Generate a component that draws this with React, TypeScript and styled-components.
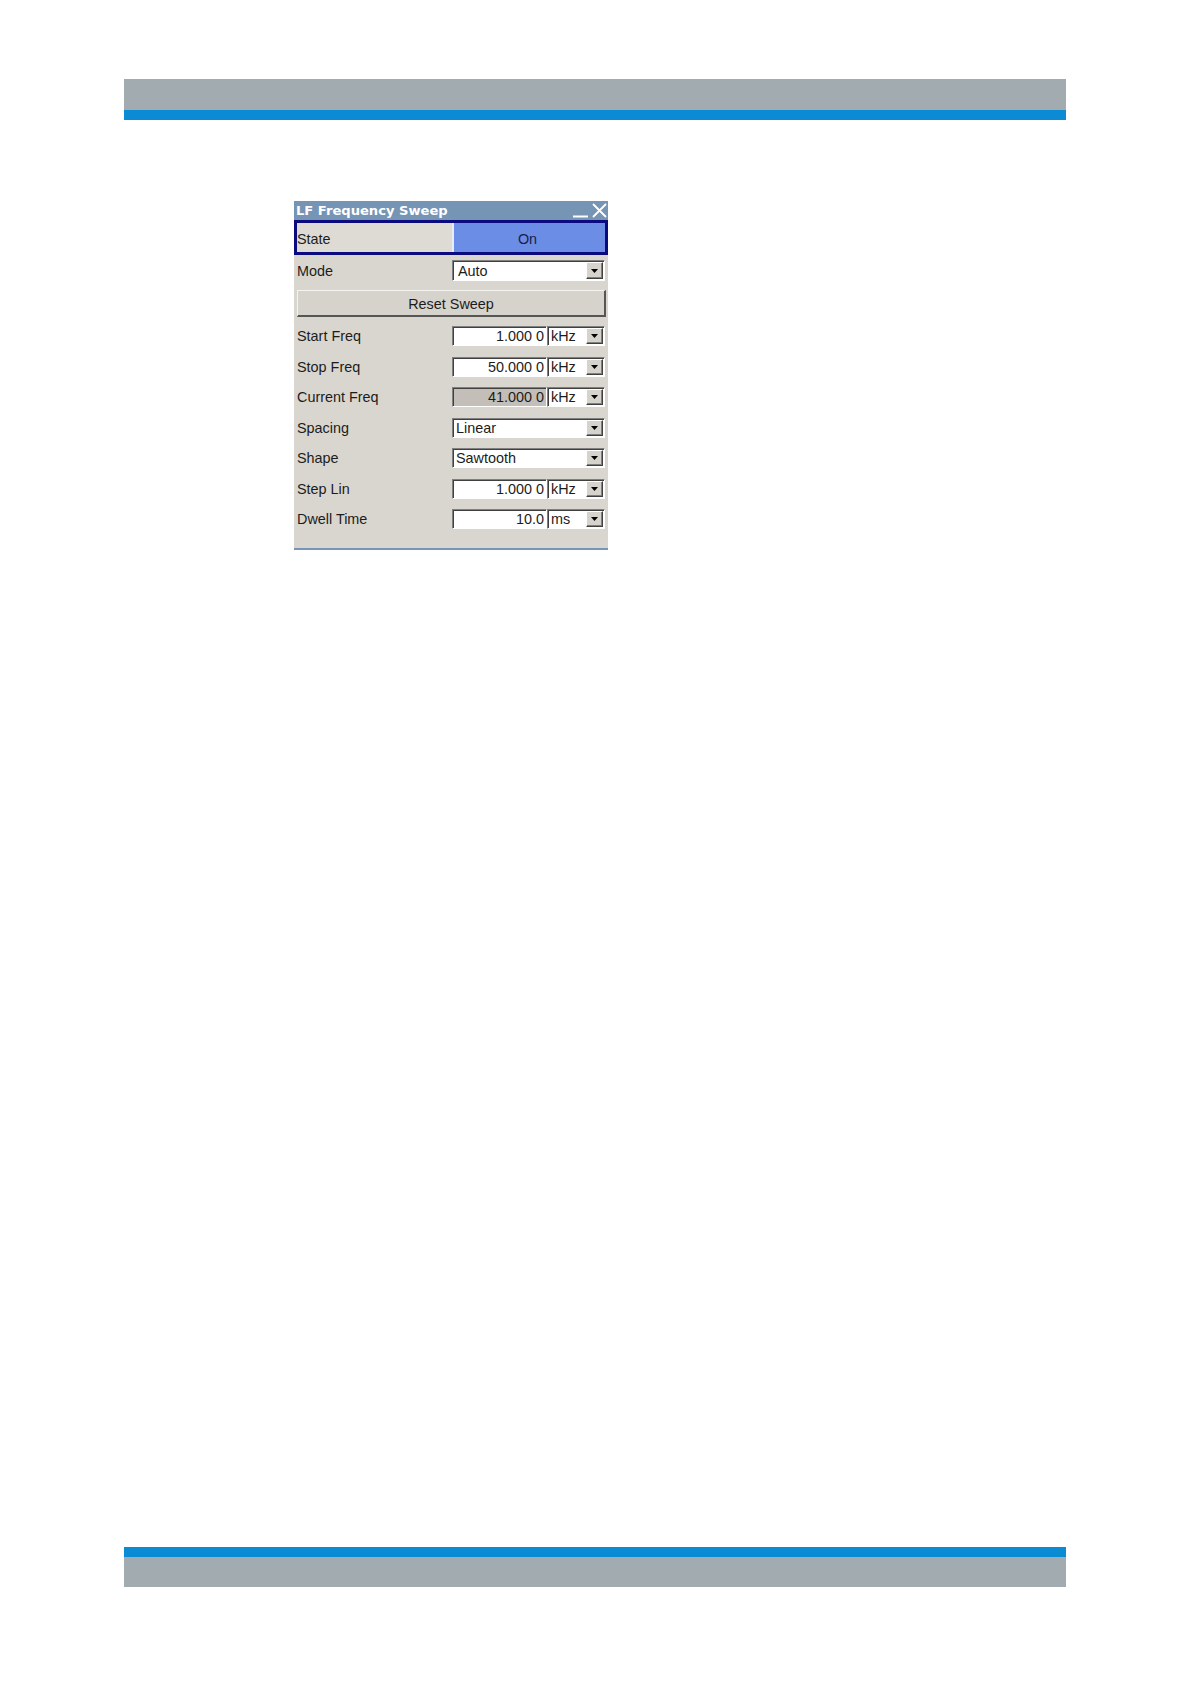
import React from "react";
import styled, { createGlobalStyle } from "styled-components";

const GlobalStyle = createGlobalStyle`
  html, body {
    margin: 0;
    padding: 0;
    background: #ffffff;
  }
  body {
    font-family: "Liberation Sans", Arial, sans-serif;
  }
`;

const Page = styled.div`
  width: 1191px;
  min-height: 1684px;
  display: flex;
  flex-direction: column;
  padding-top: 79px;
  box-sizing: border-box;
`;

const Band = styled.div<{ $flip?: boolean }>`
  margin-left: 124px;
  width: 942px;
  display: flex;
  flex-direction: ${(p) => (p.$flip ? "column-reverse" : "column")};
`;

const GreyStrip = styled.div<{ $h?: number }>`
  height: ${(p) => p.$h ?? 31}px;
  background: #a1abb0;
`;

const BlueStrip = styled.div`
  height: 10px;
  background: #0a8bd3;
`;

const Footer = styled(Band)`
  margin-top: auto;
  margin-bottom: 97px;
`;

const Dialog = styled.div`
  margin-top: 81px;
  margin-left: 294px;
  width: 314px;
  background: #d9d6cf;
  border-bottom: 2px solid #7795b6;
  font-size: 14.4px;
  color: #1c1c1c;
`;

const TitleBar = styled.div`
  height: 19px;
  background: #7694b4;
  display: flex;
  align-items: center;
  justify-content: space-between;
  padding-left: 2px;
  padding-right: 1px;
`;

const TitleText = styled.span`
  color: #ffffff;
  font-family: "DejaVu Sans", Verdana, sans-serif;
  font-weight: bold;
  font-size: 13.1px;
  line-height: 19px;
`;

const WindowButtons = styled.div`
  display: flex;
  align-items: center;
  gap: 4px;
`;

const StateRow = styled.div`
  height: 29px;
  border: 3px solid #0b0a7e;
  display: grid;
  grid-template-columns: 155px 1fr;
  background: #dedbd5;
`;

const StateLabel = styled.div`
  display: flex;
  align-items: center;
  padding-top: 2px;
`;

const StateButton = styled.div`
  background: #6c8de6;
  border-left: 2px solid #e8ecf6;
  display: flex;
  align-items: center;
  justify-content: center;
  padding-top: 2px;
  padding-right: 4px;
  color: #17204a;
`;

const Body = styled.div`
  padding: 5px 3px 19px;
  display: flex;
  flex-direction: column;
`;

const Row = styled.div<{ $h?: number }>`
  display: grid;
  grid-template-columns: 155px 153px;
  height: ${(p) => p.$h ?? 20}px;
  align-items: center;
`;

const Label = styled.span`
  white-space: nowrap;
`;

const Sunken = styled.div<{ $bg?: string }>`
  box-sizing: border-box;
  height: 100%;
  background: ${(p) => p.$bg ?? "#ffffff"};
  border-top: 1px solid #808080;
  border-left: 1px solid #808080;
  border-right: 1px solid #ffffff;
  border-bottom: 1px solid #ffffff;
  box-shadow: inset 1px 1px 0 #404040;
  display: flex;
  align-items: center;
`;

const FieldPair = styled.div`
  display: grid;
  grid-template-columns: 95px 58px;
  height: 100%;
`;

const ValueBox = styled(Sunken)`
  justify-content: flex-end;
  padding-right: 2px;
`;

const ComboBox = styled(Sunken)<{ $pad?: number }>`
  justify-content: space-between;
  padding-left: ${(p) => p.$pad ?? 4}px;
  padding-right: 1px;
`;

const ArrowButton = styled.div`
  box-sizing: border-box;
  width: 17px;
  height: calc(100% - 2px);
  background: #d6d3cc;
  border-top: 1px solid #ffffff;
  border-left: 1px solid #ffffff;
  border-right: 1px solid #404040;
  border-bottom: 1px solid #404040;
  box-shadow: inset -1px -1px 0 #808080;
  display: flex;
  align-items: center;
  justify-content: center;
`;

const ResetButton = styled.div`
  margin-top: 9px;
  height: 27px;
  box-sizing: border-box;
  background: #d6d3cc;
  border-top: 1px solid #f4f3f0;
  border-left: 1px solid #f4f3f0;
  border-right: 2px solid #555555;
  border-bottom: 2px solid #555555;
  display: flex;
  align-items: center;
  justify-content: center;
  padding-top: 2px;
  margin-right: -1px;
`;

const FieldList = styled.div`
  margin-top: 9px;
  display: flex;
  flex-direction: column;
  gap: 10.5px;
`;

const Arrow = () => (
  <ArrowButton>
    <svg width="7" height="4" viewBox="0 0 7 4">
      <path d="M0 0 H7 L3.5 4 Z" fill="#000000" />
    </svg>
  </ArrowButton>
);

const Combo = ({ text }: { text: string }) => (
  <ComboBox $pad={text === "Auto" ? 5 : 3}>
    <span>{text}</span>
    <Arrow />
  </ComboBox>
);

const ValueField = ({ value, unit, readOnly }: { value: string; unit: string; readOnly?: boolean }) => (
  <FieldPair>
    <ValueBox $bg={readOnly ? "#c3bfb8" : "#ffffff"}>{value}</ValueBox>
    <ComboBox $pad={3}>
      <span>{unit}</span>
      <Arrow />
    </ComboBox>
  </FieldPair>
);

type Field =
  | { label: string; kind: "value"; value: string; unit: string; readOnly?: boolean }
  | { label: string; kind: "combo"; value: string };

const fields: Field[] = [
  { label: "Start Freq", kind: "value", value: "1.000 0", unit: "kHz" },
  { label: "Stop Freq", kind: "value", value: "50.000 0", unit: "kHz" },
  { label: "Current Freq", kind: "value", value: "41.000 0", unit: "kHz", readOnly: true },
  { label: "Spacing", kind: "combo", value: "Linear" },
  { label: "Shape", kind: "combo", value: "Sawtooth" },
  { label: "Step Lin", kind: "value", value: "1.000 0", unit: "kHz" },
  { label: "Dwell Time", kind: "value", value: "10.0", unit: "ms" },
];

export default function App() {
  return (
    <>
      <GlobalStyle />
      <Page>
        <Band>
          <GreyStrip />
          <BlueStrip />
        </Band>

        <Dialog>
          <TitleBar>
            <TitleText>LF Frequency Sweep</TitleText>
            <WindowButtons>
              <svg width="15" height="15" viewBox="0 0 15 15">
                <path d="M0 13.5 H15" stroke="#ffffff" strokeWidth="2" />
              </svg>
              <svg width="15" height="15" viewBox="0 0 15 15">
                <path d="M1 1 L14 14 M14 1 L1 14" stroke="#ffffff" strokeWidth="1.8" />
              </svg>
            </WindowButtons>
          </TitleBar>

          <StateRow>
            <StateLabel>State</StateLabel>
            <StateButton>On</StateButton>
          </StateRow>

          <Body>
            <Row $h={21}>
              <Label>Mode</Label>
              <Combo text="Auto" />
            </Row>

            <ResetButton>Reset Sweep</ResetButton>

            <FieldList>
              {fields.map((f) => (
                <Row key={f.label}>
                  <Label>{f.label}</Label>
                  {f.kind === "value" ? (
                    <ValueField value={f.value} unit={f.unit} readOnly={f.readOnly} />
                  ) : (
                    <Combo text={f.value} />
                  )}
                </Row>
              ))}
            </FieldList>
          </Body>
        </Dialog>

        <Footer $flip>
          <GreyStrip $h={30} />
          <BlueStrip />
        </Footer>
      </Page>
    </>
  );
}
